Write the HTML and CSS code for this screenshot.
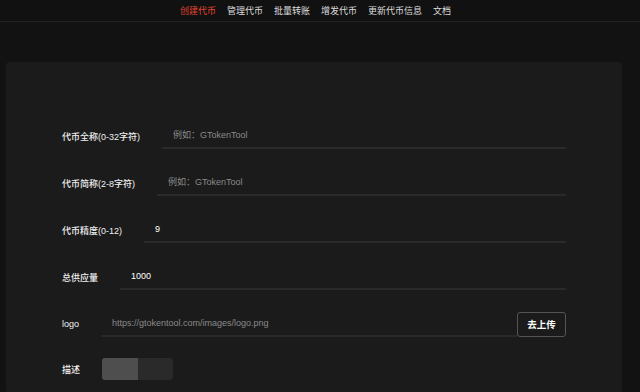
FILE: index.html
```html
<!DOCTYPE html>
<html lang="zh-CN">
<head>
  <meta charset="UTF-8">
  <title>创建代币</title>
  <meta name="viewport" content="width=device-width, initial-scale=1.0">
  <link rel="stylesheet" href="styles.css">
</head>
<body>
  <nav class="topnav">
    <a class="active" href="#">创建代币</a>
    <a href="#">管理代币</a>
    <a href="#">批量转账</a>
    <a href="#">增发代币</a>
    <a href="#">更新代币信息</a>
    <a href="#">文档</a>
  </nav>

  <main class="panel">
    <form class="token-form">
      <div class="row">
        <label for="name">代币全称(0-32字符)</label>
        <input class="field" id="name" type="text" placeholder="例如：GTokenTool">
      </div>
      <div class="row">
        <label for="symbol">代币简称(2-8字符)</label>
        <input class="field" id="symbol" type="text" placeholder="例如：GTokenTool">
      </div>
      <div class="row">
        <label for="decimals">代币精度(0-12)</label>
        <input class="field" id="decimals" type="text" value="9">
      </div>
      <div class="row">
        <label for="supply">总供应量</label>
        <input class="field" id="supply" type="text" value="1000">
      </div>
      <div class="row">
        <label for="logo">logo</label>
        <input class="field" id="logo" type="text" placeholder="https://gtokentool.com/images/logo.png">
        <button class="upload-btn" type="button">去上传</button>
      </div>
      <div class="row">
        <label>描述</label>
        <div class="toggle">
          <span class="on"></span>
          <span></span>
        </div>
      </div>
    </form>
  </main>
</body>
</html>
```

FILE: styles.css
```css
body {
  margin: 0;
  background: #121212;
  font-family: "Liberation Sans", "Noto Sans CJK SC", sans-serif;
  color: #eee;
}

.topnav {
  height: 21px;
  border-bottom: 1px solid #242424;
  background: #111;
  display: flex;
  align-items: center;
  gap: 11px;
  padding-left: 180px;
  font-family: "Noto Sans CJK SC", sans-serif;
  font-size: 9px;
}

.topnav a {
  color: #ddd;
  text-decoration: none;
}

.topnav a.active {
  color: #e5452f;
}

.panel {
  margin: 40px 18px 0 6px;
  background: #1b1b1b;
  border-radius: 4px;
  padding: 61px 56px 0;
  height: 270px;
}

.row {
  display: flex;
  align-items: center;
  margin-bottom: 21px;
}

.row label {
  margin-right: 22px;
  font-size: 9px;
  font-weight: 500;
  color: #f0f0f0;
}

.field {
  flex: 1;
  min-width: 0;
  height: 26px;
  box-sizing: border-box;
  background: transparent;
  border: none;
  border-bottom: 2px solid #2a2a2a;
  padding: 0 0 0 11px;
  font-family: inherit;
  font-size: 9px;
  color: #fff;
  outline: none;
}

.field::placeholder {
  color: #8a8a8a;
}

.upload-btn {
  width: 49px;
  height: 25px;
  background: #1b1b1b;
  border: 1px solid #555;
  border-radius: 3px;
  color: #fff;
  font-family: "Noto Sans CJK SC", sans-serif;
  font-size: 9.5px;
  font-weight: bold;
  cursor: pointer;
}

.toggle {
  display: flex;
  width: 71px;
  height: 22px;
  border-radius: 3px;
  overflow: hidden;
  background: #2a2a2a;
}

.toggle span {
  flex: 1;
}

.toggle .on {
  background: #4e4e4e;
}
```
